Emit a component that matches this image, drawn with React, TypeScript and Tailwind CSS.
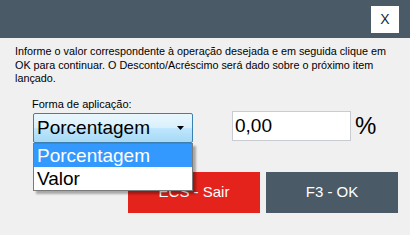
const FONT = "font-['Liberation_Sans',Arial,sans-serif]"

function Header() {
  return (
    <div className="h-[38px] bg-[#4b5a67] flex justify-end items-start pt-[6px] pr-[11px]">
      <button className="w-[28px] h-[27px] bg-white text-[14px] text-[#1b2a3a] flex items-center justify-center">
        X
      </button>
    </div>
  )
}

function ComboBox() {
  return (
    <div className="relative">
      <div className="w-[160px] h-[30px] rounded-[2px] border border-[#3c7fb1] bg-[linear-gradient(to_bottom,#eaf6fd_0%,#d9f0fc_48%,#bee6fd_52%,#a7d9f5_100%)] flex items-center pl-[3px] pr-[8px]">
        <span className="flex-1 text-[19px] leading-none text-black">Porcentagem</span>
        <svg width="7" height="4" viewBox="0 0 7 4">
          <path d="M0 0h7L3.5 4z" fill="#000" />
        </svg>
      </div>
      <ul className="absolute left-0 top-[30px] w-[160px] border border-[#7a7a7a] bg-white shadow-[3px_3px_2px_rgba(0,0,0,0.3)] z-10">
        <li className="h-[23px] bg-[#3399ff] text-white text-[19px] leading-[23px] pl-[3px]">Porcentagem</li>
        <li className="h-[23px] text-black text-[19px] leading-[23px] pl-[3px]">Valor</li>
      </ul>
    </div>
  )
}

export default function App() {
  return (
    <div className={`w-[410px] h-[235px] bg-[#f0f0f0] overflow-hidden ${FONT}`}>
      <Header />
      <div className="pl-[15px] pt-[7px] text-[10.8px] leading-[13.5px] text-black whitespace-nowrap">
        <p>
          Informe o valor correspondente à operação desejada e em seguida clique em
          <br />
          OK para continuar. O Desconto/Acréscimo será dado sobre o próximo item
          <br />
          lançado.
        </p>
      </div>
      <div className="pl-[32px] pt-[12px] text-[11px] leading-[13px]">Forma de aplicação:</div>
      <div className="flex items-start pl-[33px] pt-0">
        <div className="pt-[2px]">
          <ComboBox />
        </div>
        <input
          readOnly
          value="0,00"
          className="ml-[39px] w-[119px] h-[30px] bg-white border border-[#c9ccd2] text-[19px] pl-[2px] text-black outline-none"
        />
        <span className="ml-[4px] text-[24px] leading-[30px] text-black">%</span>
      </div>
      <div className="flex justify-end gap-[6px] pr-[12px] pt-[29px]">
        <button className="w-[132px] h-[41px] bg-[#e3231c] text-white text-[15px]">ECS - Sair</button>
        <button className="w-[132px] h-[41px] bg-[#4b5a67] text-white text-[15px]">F3 - OK</button>
      </div>
    </div>
  )
}
